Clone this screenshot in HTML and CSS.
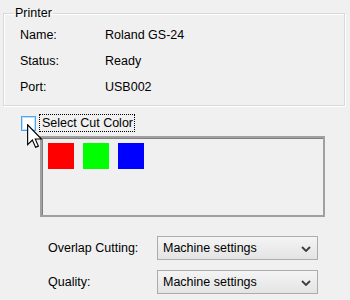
FILE: index.html
```html
<!DOCTYPE html>
<html>
<head>
<meta charset="utf-8">
<link rel="stylesheet" href="styles.css">
</head>
<body>
<div class="page">
  <fieldset class="group">
    <legend class="legend">Printer</legend>
    <div class="info">
      <span class="key">Name:</span><span class="val">Roland GS-24</span>
      <span class="key">Status:</span><span class="val">Ready</span>
      <span class="key">Port:</span><span class="val">USB002</span>
    </div>
  </fieldset>

  <div class="check-row">
    <span class="checkbox"></span>
    <span class="check-label">Select Cut Color</span>
    <svg class="cursor" width="15" height="24" viewBox="0 0 12 19">
      <path d="M0.5 0.5 L0.5 16.5 L4.3 12.7 L6.9 18.6 L9.1 17.6 L6.6 11.9 L11.5 11.9 Z" fill="#fff" stroke="#000" stroke-width="0.9" stroke-linejoin="miter"/>
    </svg>
  </div>

  <div class="colors">
    <span class="swatch red"></span>
    <span class="swatch green"></span>
    <span class="swatch blue"></span>
  </div>

  <div class="settings">
    <span class="set-label">Overlap Cutting:</span>
    <div class="select"><span>Machine settings</span>
      <svg class="chev" width="10" height="6" viewBox="0 0 10 6"><path d="M1 1 L5 5 L9 1" fill="none" stroke="#3c3c3c" stroke-width="1.8"/></svg>
    </div>
    <span class="set-label">Quality:</span>
    <div class="select"><span>Machine settings</span>
      <svg class="chev" width="10" height="6" viewBox="0 0 10 6"><path d="M1 1 L5 5 L9 1" fill="none" stroke="#3c3c3c" stroke-width="1.8"/></svg>
    </div>
  </div>
</div>
</body>
</html>
```

FILE: styles.css
```css
html, body {
  margin: 0;
  padding: 0;
  background: #f0f0f0;
}
body {
  font-family: "Liberation Sans", Arial, sans-serif;
  font-size: 12.5px;
  color: #000;
  width: 350px;
  height: 300px;
  overflow: hidden;
}
.page {
  padding: 6px 5px 0 3px;
}
.group {
  margin: 0;
  padding: 1px 0 5px 16px;
  border: 1px solid #d8d8d8;
  box-shadow: inset 1px 1px 0 #fff, 1px 1px 0 #fff;
  min-width: 0;
}
.legend {
  padding: 0 1px;
  margin-left: -6px;
  line-height: 15px;
}
.info {
  display: grid;
  grid-template-columns: 85px auto;
  grid-auto-rows: 26px;
  align-items: center;
}
.check-row {
  position: relative;
  display: flex;
  align-items: center;
  margin-top: 8px;
  margin-left: 18px;
  height: 18px;
}
.checkbox {
  width: 13px;
  height: 13px;
  border: 1px solid #4ea4f0;
  box-shadow: inset 0 0 0 1px #bfe0fb;
  background: #fff;
  margin-right: 3px;
}
.check-label {
  border: 1px dotted #000;
  padding: 0 1px 0 2px;
  line-height: 16px;
}
.cursor {
  position: absolute;
  left: 6px;
  top: 10px;
}
.colors {
  margin: 4px 0 0 37px;
  width: 275px;
  height: 72px;
  border: 2px solid #a0a0a0;
  box-shadow: inset 1px 1px 0 #808080;
  display: flex;
  gap: 9px;
  padding: 5px 0 0 6px;
  box-sizing: content-box;
  align-items: flex-start;
}
.swatch {
  width: 26px;
  height: 26px;
}
.red { background: #ff0000; }
.green { background: #00ff00; }
.blue { background: #0000ff; }
.settings {
  display: grid;
  grid-template-columns: 109px 161px;
  grid-auto-rows: 24px;
  row-gap: 10px;
  align-items: center;
  margin: 19px 0 0 45px;
}
.select {
  height: 22px;
  border: 1px solid #acacac;
  background: linear-gradient(#f4f4f4, #e4e4e4);
  display: flex;
  align-items: center;
  justify-content: space-between;
  padding: 0 6px 0 5px;
}
.chev {
  margin-top: 1px;
}
```
